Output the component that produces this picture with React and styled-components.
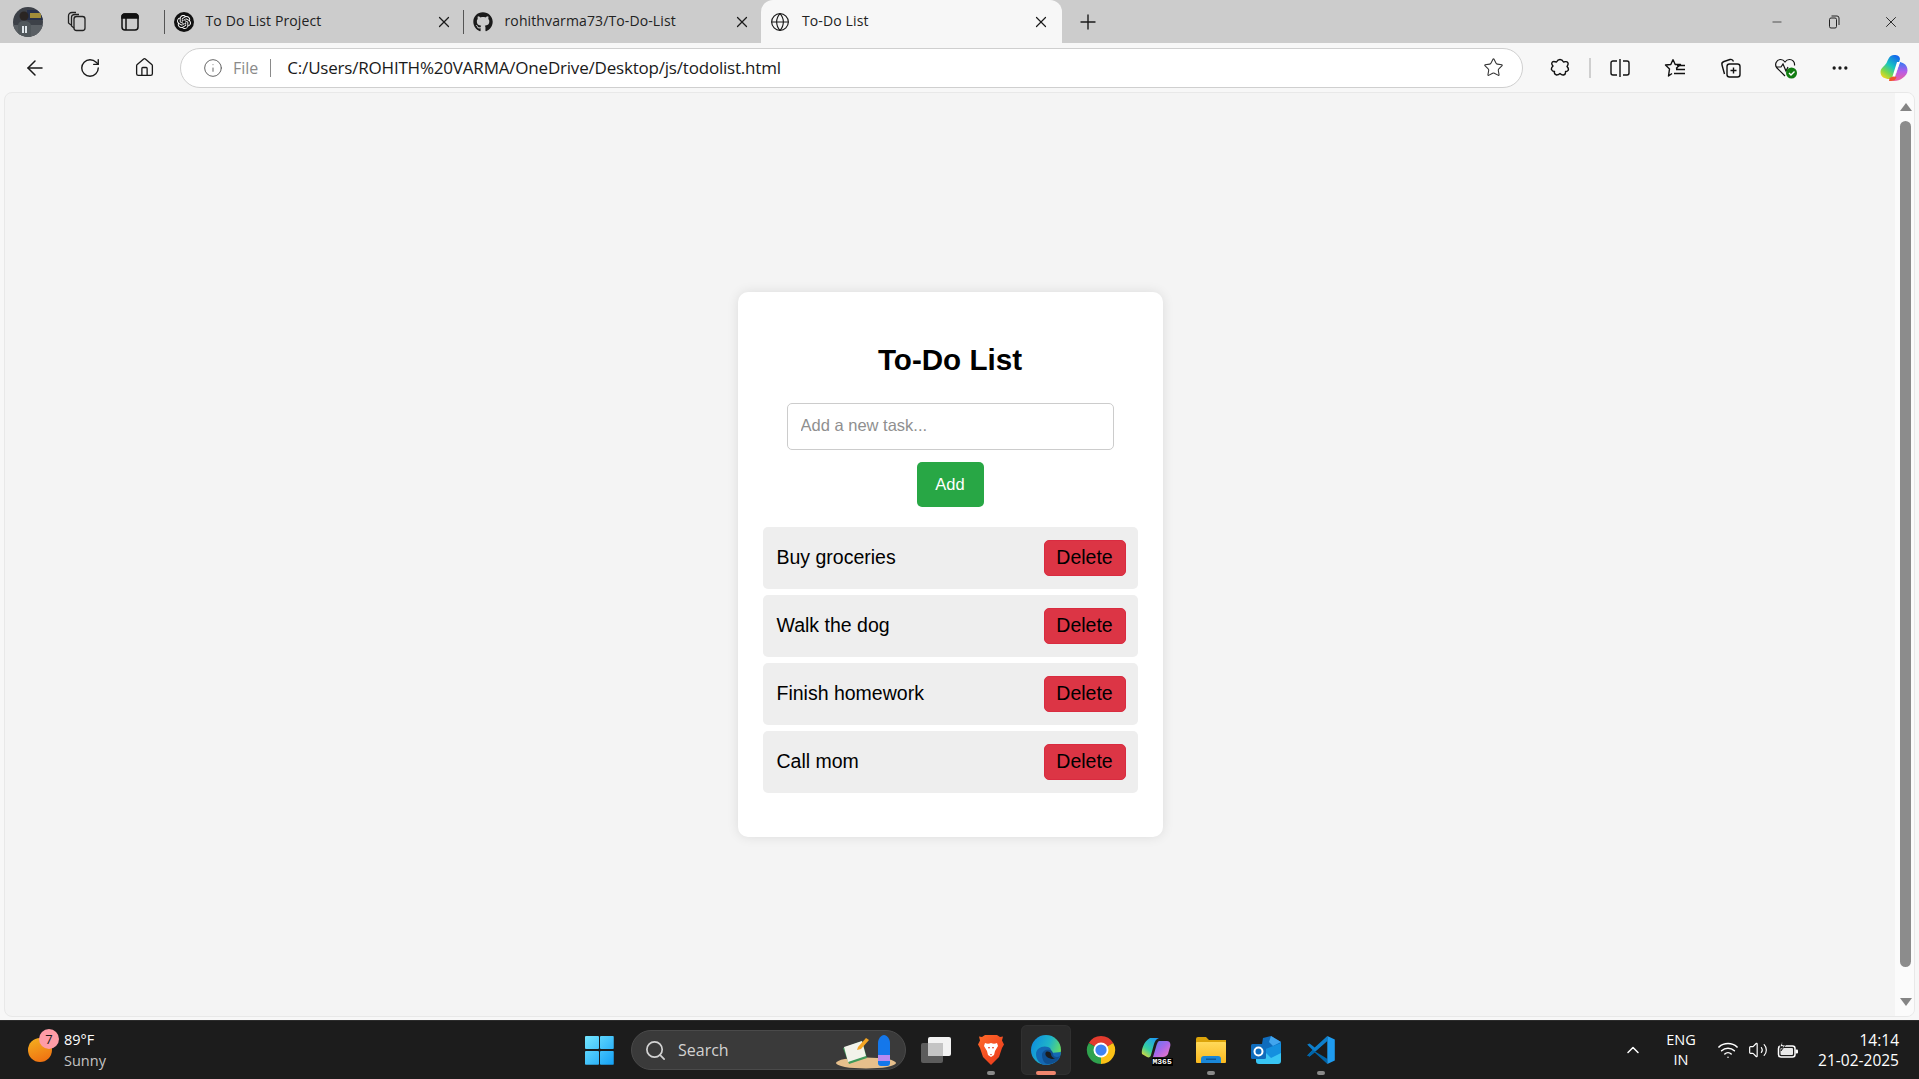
import React from "react";
import styled, { createGlobalStyle } from "styled-components";
import {
  ArrowLeft,
  RotateCw,
  House,
  Info,
  Star,
  X,
  Plus,
  Minus,
  Search,
  ChevronUp,
  Wifi,
  Volume2,
  Globe,
  Ellipsis,
} from "lucide-react";
import { FaGithub } from "react-icons/fa";
import { SiOpenai } from "react-icons/si";

const GlobalStyle = createGlobalStyle`
  html, body {
    margin: 0;
    padding: 0;
    overflow: hidden;
  }
  * {
    box-sizing: border-box;
  }
`;

const Shell = styled.div`
  width: 1919px;
  height: 1079px;
  display: flex;
  flex-direction: column;
  background: #f7f7f7;
  font-family: "Open Sans", "Noto Sans", sans-serif;
`;

/* browser chrome */
const TabStrip = styled.div`
  height: 43px;
  flex: none;
  display: flex;
  align-items: center;
  background: #cccccc;
  color: #1a1a1a;
`;

const StripTools = styled.div`
  width: 164px;
  flex: none;
  display: flex;
  align-items: center;
  padding-left: 13px;
`;

const StripButton = styled.div`
  width: 30px;
  height: 30px;
  display: flex;
  align-items: center;
  justify-content: center;
  margin-left: ${(p) => p.$left}px;
`;

const TabDivider = styled.div`
  width: 1px;
  height: 24px;
  flex: none;
  background: #555;
`;

const Tab = styled.div`
  width: ${(p) => p.$w}px;
  height: 43px;
  flex: none;
  display: flex;
  align-items: center;
  padding: 0 ${(p) => (p.$active ? 12 : 10)}px 0 ${(p) => (p.$active ? 9 : 8.5)}px;
  border-radius: ${(p) => (p.$active ? "12px 12px 0 0" : "0")};
  background: ${(p) => (p.$active ? "#f7f7f7" : "transparent")};
`;

const TabIcon = styled.div`
  width: 20px;
  height: 20px;
  flex: none;
  display: flex;
  align-items: center;
  justify-content: center;
`;

const FaviconDisc = styled.div`
  width: 20px;
  height: 20px;
  border-radius: 50%;
  background: #111;
  color: #fff;
  display: flex;
  align-items: center;
  justify-content: center;
`;

const TabTitle = styled.div`
  flex: 1;
  margin-left: 12px;
  font-size: 14px;
  letter-spacing: 0.12px;
  white-space: nowrap;
  color: #222;
  position: relative;
  top: -1px;
`;

const NewTab = styled.div`
  margin-left: 13px;
  width: 26px;
  display: flex;
  justify-content: center;
`;

const WindowControls = styled.div`
  margin-left: auto;
  display: flex;
`;

const WindowButton = styled.div`
  width: 57px;
  height: 43px;
  display: flex;
  align-items: center;
  justify-content: center;
`;

const Toolbar = styled.div`
  height: 49px;
  flex: none;
  display: flex;
  align-items: center;
  padding-left: 7px;
  color: #1a1a1a;
`;

const ToolButton = styled.div`
  width: ${(p) => p.$w || 55}px;
  height: 40px;
  flex: none;
  display: flex;
  align-items: center;
  justify-content: center;
`;

const AddressBar = styled.div`
  width: 1343px;
  height: 40px;
  flex: none;
  margin: 0 8px;
  display: flex;
  align-items: center;
  padding: 0 18px 0 22px;
  background: #fff;
  border: 1px solid #cfcfcf;
  border-radius: 20px;
`;

const FileLabel = styled.span`
  margin-left: 10px;
  font-size: 16px;
  color: #8a8a8a;
`;

const AddressSep = styled.div`
  width: 1px;
  height: 18px;
  margin: 0 16px 0 12px;
  background: #8a8a8a;
`;

const Url = styled.span`
  flex: 1;
  font-size: 17px;
  letter-spacing: -0.2px;
  color: #1a1a1a;
  white-space: nowrap;
`;

const ToolSep = styled.div`
  width: 2px;
  height: 20px;
  flex: none;
  background: #cfcfcf;
  margin: 0 1px;
`;

/* page area */
const Viewport = styled.div`
  height: 925px;
  flex: none;
  margin: 0 4px;
  display: flex;
  background: #f4f4f4;
  border: 1px solid #e8e8e8;
  border-radius: 8px;
  overflow: hidden;
`;

const Page = styled.div`
  flex: 1;
  display: flex;
  justify-content: center;
  align-items: flex-start;
  padding-top: 199px;
`;

const Card = styled.div`
  width: 425px;
  display: flex;
  flex-direction: column;
  align-items: center;
  padding: 50px 25px 44px;
  background: #fff;
  border-radius: 10px;
  box-shadow: 0 0 12px rgba(0, 0, 0, 0.1);
  font-family: "Liberation Sans", Arial, sans-serif;
`;

const Title = styled.h1`
  margin: 0 0 26px;
  font-size: 29.6px;
  line-height: 35px;
  font-weight: 700;
  color: #000;
`;

const TaskInput = styled.input`
  width: 327px;
  height: 47px;
  padding: 0 13px 2px;
  background: #fff;
  border: 1px solid #ccc;
  border-radius: 5px;
  font-family: inherit;
  font-size: 16.5px;
  outline: none;
  &::placeholder {
    color: #8f8f8f;
  }
`;

const AddButton = styled.button`
  width: 67px;
  height: 45px;
  margin-top: 12px;
  background: #28a745;
  border: none;
  border-radius: 5px;
  color: #fff;
  font-family: inherit;
  font-size: 16.5px;
`;

const TaskList = styled.ul`
  width: 375px;
  margin: 20px 0 0;
  padding: 0;
  list-style: none;
  display: flex;
  flex-direction: column;
  gap: 6.5px;
`;

const TaskRow = styled.li`
  height: 61.5px;
  display: flex;
  align-items: center;
  justify-content: space-between;
  padding: 0 12px 0 14px;
  background: #eeeeee;
  border-radius: 5px;
  font-size: 19.5px;
  color: #000;
`;

const DeleteButton = styled.button`
  width: 82px;
  height: 36px;
  padding: 0;
  background: #dc3545;
  border: 1px solid #d92b40;
  border-radius: 5px;
  color: #000;
  font-family: inherit;
  font-size: 19.5px;
`;

const ScrollTrack = styled.div`
  width: 19px;
  flex: none;
  display: flex;
  flex-direction: column;
  align-items: center;
  background: #fbfbfb;
  padding: 10px 0 0 2px;
`;

const ArrowUp = styled.div`
  width: 0;
  height: 0;
  border-left: 6px solid transparent;
  border-right: 6px solid transparent;
  border-bottom: 8px solid #858585;
`;

const ArrowDown = styled.div`
  width: 0;
  height: 0;
  margin-top: 31px;
  border-left: 6px solid transparent;
  border-right: 6px solid transparent;
  border-top: 8px solid #858585;
`;

const Thumb = styled.div`
  width: 11px;
  height: 846px;
  margin-top: 10px;
  background: #8c8c8c;
  border-radius: 6px;
`;

/* taskbar */
const Taskbar = styled.div`
  margin-top: auto;
  height: 59px;
  flex: none;
  display: flex;
  align-items: center;
  background: #1c1c1c;
  border-top: 1px solid #2c2c2c;
  color: #fff;
`;

const Weather = styled.div`
  width: 585px;
  flex: none;
  display: flex;
  align-items: center;
  padding-left: 28px;
`;

const SunWrap = styled.div`
  position: relative;
  width: 24px;
  height: 24px;
  flex: none;
`;

const Sun = styled.div`
  width: 24px;
  height: 24px;
  border-radius: 50%;
  background: linear-gradient(160deg, #f5b21f, #ee6a10);
`;

const Badge = styled.div`
  position: absolute;
  top: -9px;
  left: 11px;
  width: 20px;
  height: 20px;
  border-radius: 50%;
  background: #ff9ca6;
  color: #1a1a1a;
  font-size: 13px;
  line-height: 20px;
  text-align: center;
`;

const WeatherText = styled.div`
  margin-left: 12px;
  display: flex;
  flex-direction: column;
  font-size: 14.5px;
  line-height: 21px;
`;

const MutedLine = styled.span`
  color: #c4c4c4;
`;

const Start = styled.div`
  width: 29px;
  height: 29px;
  flex: none;
  display: grid;
  grid-template-columns: 1fr 1fr;
  gap: 1.5px;
`;

const StartPane = styled.div`
  background: linear-gradient(135deg, #74e6ff, #14a0f5);
  background-size: 29px 29px;
  background-position: ${(p) => p.$pos};
  border-radius: 1px;
`;

const SearchPill = styled.div`
  position: relative;
  width: 275px;
  height: 40px;
  flex: none;
  margin: 0 2.5px 0 17px;
  display: flex;
  align-items: center;
  padding-left: 12px;
  background: #3a3a3a;
  border: 1px solid #4a4a4a;
  border-radius: 20px;
  color: #d2d2d2;
`;

const SearchLabel = styled.span`
  margin-left: 11px;
  font-size: 16px;
`;

const SearchArt = styled.svg`
  position: absolute;
  right: 7px;
  bottom: 0;
`;

const AppSlot = styled.div`
  position: relative;
  width: ${(p) => (p.$active ? 50 : 55)}px;
  height: 50px;
  flex: none;
  margin: 0 ${(p) => (p.$active ? 2.5 : 0)}px;
  display: flex;
  align-items: center;
  justify-content: center;
  border-radius: 6px;
  background: ${(p) => (p.$active ? "#2a2a2a" : "transparent")};
  box-shadow: ${(p) => (p.$active ? "inset 0 0 0 1px #303030" : "none")};
`;

const RunDot = styled.div`
  position: absolute;
  bottom: 0;
  left: 50%;
  transform: translateX(-50%);
  width: ${(p) => (p.$active ? 20 : 8)}px;
  height: 4px;
  border-radius: 2px;
  background: ${(p) => (p.$active ? "#f0866e" : "#8a8a8a")};
`;

const M365Tag = styled.span`
  position: absolute;
  left: 23px;
  top: 33px;
  padding: 0 1px;
  background: #000;
  color: #fff;
  font-size: 8px;
  line-height: 8px;
  font-weight: 700;
  font-family: "Liberation Mono", monospace;
`;

const Tray = styled.div`
  margin-left: auto;
  padding-right: 20px;
  display: flex;
  align-items: center;
`;

const TrayIcon = styled.div`
  width: 30px;
  display: flex;
  justify-content: center;
`;

const Lang = styled.div`
  width: 48px;
  margin: 0 8px 0 9px;
  text-align: center;
  font-size: 14.5px;
  line-height: 20px;
`;

const Clock = styled.div`
  width: 96px;
  text-align: right;
  font-size: 15.5px;
  line-height: 20px;
`;

/* drawn icons */
const Avatar = () => (
  <svg width="30" height="30" viewBox="0 0 30 30">
    <defs>
      <clipPath id="av">
        <circle cx="15" cy="15" r="15" />
      </clipPath>
    </defs>
    <g clipPath="url(#av)">
      <rect width="30" height="30" fill="#3d4148" />
      <rect x="14" y="3" width="16" height="10" fill="#26304a" />
      <rect x="17" y="6" width="11" height="5" fill="#a08c3a" />
      <rect y="18" width="30" height="12" fill="#5a5f64" />
      <circle cx="11" cy="9" r="4.5" fill="#2a2523" />
      <path d="M5 30V19c0-4 3-5 6-5s7 1 7 5v11z" fill="#50575b" />
      <rect x="9" y="19" width="2" height="7" fill="#dfe6ea" />
      <rect x="12" y="19" width="2" height="7" fill="#dfe6ea" />
    </g>
  </svg>
);

const TabsStack = () => (
  <svg width="22" height="22" viewBox="0 0 22 22" fill="none" stroke="#222" strokeWidth="1.3">
    <rect x="8" y="5.5" width="11" height="14" rx="2.5" />
    <path d="M8 17 5.5 15V6.5C5.5 4.5 7 3.5 9 3.5h4" />
    <path d="M5 14 2.5 12V5C2.5 3 4 1.5 6 1.5h4" />
  </svg>
);

const VerticalTabs = () => (
  <svg width="18" height="18" viewBox="0 0 18 18" fill="none" stroke="#111" strokeWidth="1.5">
    <rect x="1" y="1" width="16" height="16" rx="3" />
    <path d="M1 3.5A2.5 2.5 0 0 1 3.5 1h11A2.5 2.5 0 0 1 17 3.5V5H1z" fill="#111" />
    <path d="M5 5v12" />
  </svg>
);

const Restore = () => (
  <svg width="12" height="14" viewBox="0 0 12 14" fill="none" stroke="#222" strokeWidth="1">
    <rect x="1.5" y="3" width="7" height="10" rx="1.5" />
    <path d="M3.5 1h5.5a2 2 0 0 1 2 2v7" />
  </svg>
);

const PuzzleIcon = () => (
  <svg width="20" height="20" viewBox="0 0 20 20" fill="none" stroke="#111" strokeWidth="1.4" strokeLinejoin="round">
    <path d="M10 1.5c2 0 3 1.500 3.500 2.500 1.500-.5 4-.5 4.500 1 .5 1.500-.5 2.500-1 3.500 1 1 2 2.500 1 4-.5 1-1.500 1-2.500 1 .3 1.500-.5 3-2 3.500-1.500.3-2.500-.5-3.500-1.500-1 1-2 1.500-3.500 1.500-1.500-.5-2.500-2-2-3.500-1 0-2.500-.5-3-2-.5-1.500.5-2.500 1.500-3.500-1-1-1.500-2.500-1-3.500.5-1.500 3-1 4.500-.500C7 3 8 1.500 10 1.500z" />
  </svg>
);

const SplitIcon = () => (
  <svg width="20" height="20" viewBox="0 0 20 20" fill="none" stroke="#111" strokeWidth="1.4">
    <path d="M7 3H3a2 2 0 0 0-2 2v10a2 2 0 0 0 2 2h4M13 3h4a2 2 0 0 1 2 2v10a2 2 0 0 1-2 2h-4" />
    <path d="M10 1v18" />
  </svg>
);

const FavoritesIcon = () => (
  <svg width="22" height="20" viewBox="0 0 22 20" fill="none" stroke="#111" strokeWidth="1.4" strokeLinejoin="round">
    <path d="M9 1.5 11.2 6.500H16.500L12.500 10l1 1.500M9 1.500 6.800 6.500 1.500 7l4 4L4.500 18 8 15.500" />
    <path d="M13 7.500h8M12 11.500h9M10 15.500h11" />
  </svg>
);

const CollectionsIcon = () => (
  <svg width="22" height="22" viewBox="0 0 22 22" fill="none" stroke="#111" strokeWidth="1.4">
    <rect x="7" y="7" width="13" height="13" rx="2.5" />
    <path d="M13.5 10.5v6M10.500 13.500h6" />
    <path d="M4.500 17 2 8c-.4-1.500.4-3 2-3.500L10 2.500c1.500-.4 3 .5 3.500 2" />
  </svg>
);

const HeartIcon = () => (
  <svg width="24" height="24" viewBox="0 0 24 24" fill="none">
    <path
      d="M11 20 3 12C0 8.500 2.500 3.500 6.500 3.500c2 0 3.500 1 4.500 2.500 1-1.500 2.500-2.500 4.500-2.500 3 0 5.500 2.500 5 6M2 11h5l2-3 3 7 2-4"
      stroke="#111"
      strokeWidth="1.2"
    />
    <circle cx="17.5" cy="17" r="5.5" fill="#107c10" />
    <path d="m15 17 2 2 3.500-3.500" stroke="#fff" strokeWidth="1.4" />
  </svg>
);

const CopilotIcon = () => (
  <svg width="28" height="28" viewBox="0 0 28 28">
    <defs>
      <linearGradient id="copA" x1="0.8" y1="0" x2="0.2" y2="1">
        <stop offset="0" stopColor="#1463f0" />
        <stop offset="0.45" stopColor="#18c6c0" />
        <stop offset="0.75" stopColor="#7fd84a" />
        <stop offset="1" stopColor="#f7d51e" />
      </linearGradient>
      <linearGradient id="copB" x1="0.5" y1="0" x2="0.5" y2="1">
        <stop offset="0" stopColor="#2f7bf5" />
        <stop offset="0.5" stopColor="#b45ce8" />
        <stop offset="1" stopColor="#f0609a" />
      </linearGradient>
    </defs>
    <path d="M14 1c4 0 5.500 1 6 4L15 22c-1 3-3 3-6 3-4 0-8.500-2-8.500-7 0-4 3.500-5 6-9 2-4 3-8 7.500-8z" fill="url(#copA)" />
    <path d="M14 27c-2 0-3-1-3-3 3 0 4-1 5-4l4-12c4 1 7.500 3 7.500 8.500C27.500 22 20 27 14 27z" fill="url(#copB)" />
    <path d="M17 8h3l-5 14c-.4 1-1 2-3 2z" fill="#fff" />
    <path d="M9 27c3 0 6.500 0 7.500-4l-3.500-.5-3.500 1.500z" fill="#f0562a" />
  </svg>
);

const TaskView = () => (
  <svg width="32" height="28" viewBox="0 0 32 28">
    <rect x="1" y="7" width="22" height="20" rx="2" fill="#5c5c5c" />
    <rect x="8" y="1" width="23" height="19" rx="2" fill="#f2f2f2" />
    <rect x="8" y="7" width="15" height="13" fill="#c4c4c4" />
  </svg>
);

const BraveIcon = () => (
  <svg width="26" height="32" viewBox="0 0 26 32">
    <defs>
      <linearGradient id="br" x1="0" y1="0" x2="1" y2="1">
        <stop offset="0" stopColor="#ff6a2a" />
        <stop offset="1" stopColor="#e8351a" />
      </linearGradient>
    </defs>
    <path d="M7 1h12l3 2 3-.5-1 4 2 4-2 3.500-3 9-8 8-8-8-3-9-2-3.500 2-4-1-4 3 .5z" fill="url(#br)" />
    <path d="M7 9c2 1 4 1 6 0 2 1 4 1 6 0l1 3-3 5-1 4-3 2-3-2-1-4-3-5z" fill="#fff" />
    <path d="M10 13h2l-1 2zM14 13h2l-1 2zM12 20h2l-1 1.500z" fill="#e8351a" />
  </svg>
);

const EdgeIcon = () => (
  <svg width="30" height="30" viewBox="0 0 30 30">
    <defs>
      <linearGradient id="edA" x1="0" y1="0.2" x2="1" y2="0.6">
        <stop offset="0" stopColor="#0d8ce0" />
        <stop offset="0.55" stopColor="#1fb5c8" />
        <stop offset="1" stopColor="#6ee05a" />
      </linearGradient>
    </defs>
    <circle cx="15" cy="15" r="15" fill="url(#edA)" />
    <path d="M5 19c0-6 7-9 12-7 3 1 4 4 3 6l10-1c0 8-7 13-15 13C9 30 5 25 5 19z" fill="#1468b4" />
    <path d="M11 20c0-4 4-6 8-5 2 .5 3 2 3 4 0 2 2 3 4 3 1 0 2-.3 3-1-2 5-7 8-12 8-4 0-6-5-6-9z" fill="#0f4f90" />
    <path d="M15 17c2-1 5 0 5 2s1.500 4 4 4.500c-3 1-6 0-8-1.500-2-1.500-2-4-1-5z" fill="#1c1c1c" />
  </svg>
);

const ChromeIcon = () => (
  <svg width="30" height="30" viewBox="0 0 32 32">
    <path d="M16 16 3 8.500A15 15 0 0 1 29 8.500z" fill="#e33b2e" />
    <path d="M16 16 29 8.500A15 15 0 0 1 16 31z" fill="#fbc116" />
    <path d="M16 16V31A15 15 0 0 1 3 8.500z" fill="#2fa24e" />
    <circle cx="16" cy="16" r="8" fill="#fff" />
    <circle cx="16" cy="16" r="6" fill="#3f82f1" />
  </svg>
);

const M365Icon = () => (
  <svg width="30" height="26" viewBox="0 0 30 26">
    <defs>
      <linearGradient id="mA" x1="0.8" y1="0" x2="0.1" y2="1">
        <stop offset="0" stopColor="#1d9bf5" />
        <stop offset="0.6" stopColor="#35d0a0" />
        <stop offset="1" stopColor="#f2d92e" />
      </linearGradient>
      <linearGradient id="mB" x1="0" y1="0" x2="1" y2="1">
        <stop offset="0" stopColor="#5b7cf5" />
        <stop offset="0.5" stopColor="#a868ea" />
        <stop offset="1" stopColor="#f678c0" />
      </linearGradient>
    </defs>
    <path d="M9 1h9c-3 1-4 3-5 6l-3 11c-.5 2-2 3-4 2L1 17c-1-4 2-13 8-16z" fill="url(#mA)" />
    <path d="M18 4h8c3 0 4 3 3 6l-2 7c-1 2-3 3-5 3H12l3-10c.5-2 2-6 3-6z" fill="url(#mB)" />
  </svg>
);

const FolderIcon = () => (
  <svg width="30" height="26" viewBox="0 0 30 26">
    <defs>
      <linearGradient id="fo" x1="0" y1="0" x2="0" y2="1">
        <stop offset="0" stopColor="#ffd95a" />
        <stop offset="1" stopColor="#fbb91e" />
      </linearGradient>
    </defs>
    <path d="M0 2a2 2 0 0 1 2-2h8l3 3h17v6H0z" fill="#dca40a" />
    <rect y="5" width="30" height="21" rx="1" fill="url(#fo)" />
    <path d="M5 26v-4a3 3 0 0 1 3-3h14a3 3 0 0 1 3 3v4z" fill="#1a87d8" />
    <rect x="10" y="21.5" width="10" height="1.5" fill="#0f5a98" />
  </svg>
);

const OutlookIcon = () => (
  <svg width="30" height="28" viewBox="0 0 30 28">
    <path d="M12 2 20 0l10 6v8H10z" fill="#0f6cbd" />
    <path d="M20 0l10 6-8 4-4-4z" fill="#41a5ee" />
    <path d="M5 14h25v11a3 3 0 0 1-3 3H8a3 3 0 0 1-3-3z" fill="#38c5f4" />
    <path d="M12 14 30 7v10l-10 5z" fill="#1490df" />
    <rect y="8" width="15" height="15" rx="1.5" fill="#0f6cbd" />
    <circle cx="7.5" cy="15.5" r="4" fill="none" stroke="#fff" strokeWidth="2" />
  </svg>
);

const VsCodeIcon = () => (
  <svg width="30" height="30" viewBox="0 0 100 100">
    <path d="M71 3 29 42 12 28 4 32 22 50 4 68l8 4L71 21z" fill="#0d7fcc" />
    <path d="M71 97 29 58 12 72l-8-4 18-18 49 29z" fill="#0065a9" />
    <path d="M71 21 40 50l31 29z" fill="#1c1c1c" />
    <path d="M71 3 96 15V85L71 97z" fill="#1f9cf0" />
  </svg>
);

const BatteryIcon = () => (
  <svg width="22" height="18" viewBox="0 0 22 18" fill="none">
    <rect x="1.5" y="5" width="16.5" height="11" rx="2.5" stroke="#fff" strokeWidth="1.5" />
    <rect x="3.5" y="7" width="12.500" height="7" rx="1" fill="#e8e8e8" />
    <rect x="18.5" y="8.5" width="2.5" height="4" rx="1" fill="#fff" />
    <path d="M5.500 0 3 5.500h3L4 10l4.500-6H5.500z" fill="#fff" stroke="#1c1c1c" strokeWidth="0.8" />
  </svg>
);

const SearchDecor = () => (
  <SearchArt width="62" height="36" viewBox="0 0 62 36">
    <ellipse cx="30" cy="30" rx="30" ry="5.5" fill="#e6bf8c" />
    <path d="M7 15 26 8l5 17-18 6z" fill="#3f9a5a" />
    <path d="M8 14 26 8l4 15-18 6z" fill="#f2f2ea" />
    <path d="m22 14 8-9 3 2-8 9-4 1z" fill="#f5a623" />
    <path d="M42 10c0-4 3-8 6-8s6 4 6 8v20c0 2-1 3-3 3h-6c-2 0-3-1-3-3z" fill="#1477ea" />
    <rect x="42" y="22" width="12" height="6" fill="#b78af0" />
  </SearchArt>
);

const tasks = ["Buy groceries", "Walk the dog", "Finish homework", "Call mom"];

const App = () => {
  return (
    <Shell>
      <GlobalStyle />
      <TabStrip>
        <StripTools>
          <Avatar />
          <StripButton $left={19}>
            <TabsStack />
          </StripButton>
          <StripButton $left={23}>
            <VerticalTabs />
          </StripButton>
        </StripTools>
        <TabDivider />
        <Tab $w={298}>
          <TabIcon>
            <FaviconDisc>
              <SiOpenai size={14} />
            </FaviconDisc>
          </TabIcon>
          <TabTitle>To Do List Project</TabTitle>
          <X size={18} strokeWidth={1.6} />
        </Tab>
        <TabDivider />
        <Tab $w={297}>
          <TabIcon>
            <FaGithub size={20} />
          </TabIcon>
          <TabTitle>rohithvarma73/To-Do-List</TabTitle>
          <X size={18} strokeWidth={1.6} />
        </Tab>
        <Tab $w={301} $active>
          <TabIcon>
            <Globe size={20} strokeWidth={1.4} />
          </TabIcon>
          <TabTitle>To-Do List</TabTitle>
          <X size={18} strokeWidth={1.6} />
        </Tab>
        <NewTab>
          <Plus size={24} strokeWidth={1.4} />
        </NewTab>
        <WindowControls>
          <WindowButton>
            <Minus size={14} strokeWidth={1.2} />
          </WindowButton>
          <WindowButton>
            <Restore />
          </WindowButton>
          <WindowButton>
            <X size={18} strokeWidth={1.2} />
          </WindowButton>
        </WindowControls>
      </TabStrip>

      <Toolbar>
        <ToolButton>
          <ArrowLeft size={24} strokeWidth={1.5} />
        </ToolButton>
        <ToolButton>
          <RotateCw size={22} strokeWidth={1.5} />
        </ToolButton>
        <ToolButton>
          <House size={21} strokeWidth={1.5} />
        </ToolButton>
        <AddressBar>
          <Info size={20} strokeWidth={1.2} color="#666" />
          <FileLabel>File</FileLabel>
          <AddressSep />
          <Url>C:/Users/ROHITH%20VARMA/OneDrive/Desktop/js/todolist.html</Url>
          <Star size={21} strokeWidth={1.2} color="#333" />
        </AddressBar>
        <ToolButton $w={57}>
          <PuzzleIcon />
        </ToolButton>
        <ToolSep />
        <ToolButton>
          <SplitIcon />
        </ToolButton>
        <ToolButton $w={56}>
          <FavoritesIcon />
        </ToolButton>
        <ToolButton>
          <CollectionsIcon />
        </ToolButton>
        <ToolButton $w={56}>
          <HeartIcon />
        </ToolButton>
        <ToolButton $w={52}>
          <Ellipsis size={20} strokeWidth={2} />
        </ToolButton>
        <ToolButton>
          <CopilotIcon />
        </ToolButton>
      </Toolbar>

      <Viewport>
        <Page>
          <Card>
            <Title>To-Do List</Title>
            <TaskInput placeholder="Add a new task..." />
            <AddButton>Add</AddButton>
            <TaskList>
              {tasks.map((task) => (
                <TaskRow key={task}>
                  {task}
                  <DeleteButton>Delete</DeleteButton>
                </TaskRow>
              ))}
            </TaskList>
          </Card>
        </Page>
        <ScrollTrack>
          <ArrowUp />
          <Thumb />
          <ArrowDown />
        </ScrollTrack>
      </Viewport>

      <Taskbar>
        <Weather>
          <SunWrap>
            <Sun />
            <Badge>7</Badge>
          </SunWrap>
          <WeatherText>
            <span>89°F</span>
            <MutedLine>Sunny</MutedLine>
          </WeatherText>
        </Weather>
        <Start>
          <StartPane $pos="0 0" />
          <StartPane $pos="100% 0" />
          <StartPane $pos="0 100%" />
          <StartPane $pos="100% 100%" />
        </Start>
        <SearchPill>
          <Search size={23} strokeWidth={1.8} />
          <SearchLabel>Search</SearchLabel>
          <SearchDecor />
        </SearchPill>
        <AppSlot>
          <TaskView />
        </AppSlot>
        <AppSlot>
          <BraveIcon />
          <RunDot />
        </AppSlot>
        <AppSlot $active>
          <EdgeIcon />
          <RunDot $active />
        </AppSlot>
        <AppSlot>
          <ChromeIcon />
        </AppSlot>
        <AppSlot>
          <M365Icon />
          <M365Tag>M365</M365Tag>
        </AppSlot>
        <AppSlot>
          <FolderIcon />
          <RunDot />
        </AppSlot>
        <AppSlot>
          <OutlookIcon />
        </AppSlot>
        <AppSlot>
          <VsCodeIcon />
          <RunDot />
        </AppSlot>
        <Tray>
          <TrayIcon>
            <ChevronUp size={20} strokeWidth={1.8} />
          </TrayIcon>
          <Lang>
            ENG
            <br />
            IN
          </Lang>
          <TrayIcon>
            <Wifi size={22} strokeWidth={1.6} />
          </TrayIcon>
          <TrayIcon>
            <Volume2 size={20} strokeWidth={1.4} />
          </TrayIcon>
          <TrayIcon>
            <BatteryIcon />
          </TrayIcon>
          <Clock>
            14:14
            <br />
            21-02-2025
          </Clock>
        </Tray>
      </Taskbar>
    </Shell>
  );
};

export default App;
